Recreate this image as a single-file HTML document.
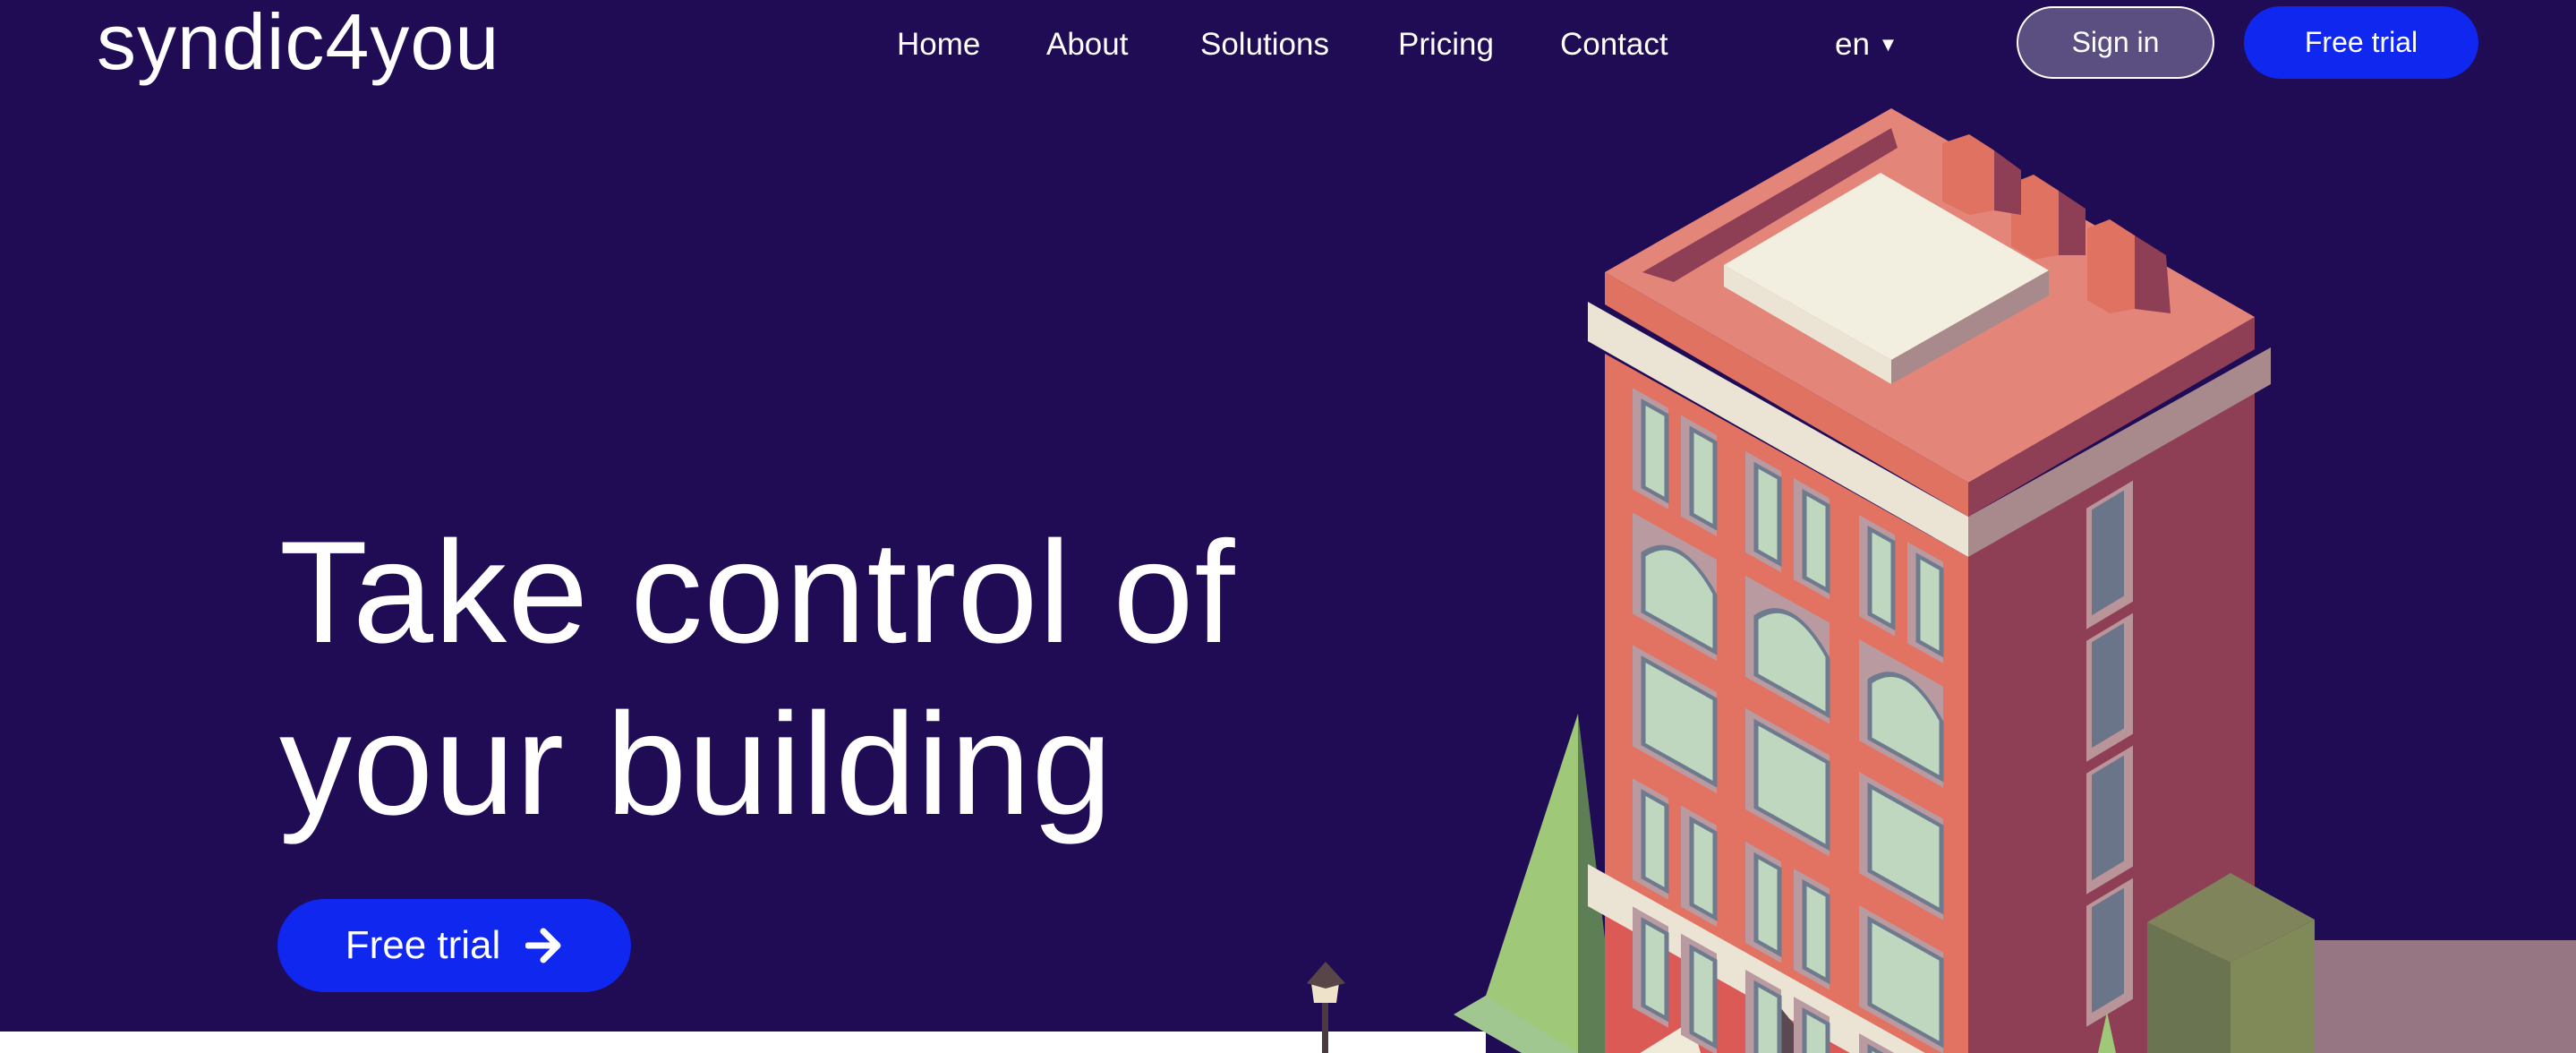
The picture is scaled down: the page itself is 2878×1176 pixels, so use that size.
<!DOCTYPE html>
<html style="overflow:hidden;width:2878px;height:1176px"><head><meta charset="utf-8"><style>
*{margin:0;padding:0;box-sizing:border-box}
body{width:2878px;height:1176px;overflow:hidden;background:#200b55;font-family:"Liberation Sans",sans-serif;color:#fff;position:relative}
.nav a{position:absolute;top:28px;font-size:35px;color:#fff;text-decoration:none;line-height:44px}
.logo{position:absolute;left:108px;top:-8px;font-size:88px;letter-spacing:1px;line-height:110px}
.btn{position:absolute;border-radius:44px;font-size:32px;display:flex;align-items:center;justify-content:center}
h1{position:absolute;left:312px;top:566px;font-size:162px;font-weight:normal;line-height:192px;letter-spacing:1px;white-space:nowrap}
</style></head><body>
<svg style="position:absolute;left:0;top:0" width="2878" height="1176" viewBox="0 0 2878 1176">
<rect x="0" y="1152" width="1660" height="24" fill="#fff"/>
<rect x="2586" y="1050" width="292" height="126" fill="#967682"/>
<rect x="1477" y="1110" width="7" height="66" fill="#4a3a3e"/>
<polygon points="1465,1098 1496,1098 1493,1120 1468,1120" fill="#eee3c8"/>
<polygon points="1460,1098 1481,1074 1503,1098 1481,1104" fill="#574548"/>
<polygon points="1624,1133 1680,1100 1810,1176 1700,1176" fill="#9fc78f"/>
<polygon points="1763,797 1660,1112 1763,1176" fill="#9fc878"/>
<polygon points="1763,797 1798,1090 1798,1176 1763,1176" fill="#5e7f55"/>
<polygon points="1793,395 2199,622 2199,1176 1793,1176" fill="#e27363"/>
<polygon points="2199,622 2519,429 2519,1176 2199,1176" fill="#8f3f55"/>
<polygon points="1793,1000 2199,1228 2199,1176 1793,1176" fill="#dc5a55"/>
<polygon points="1774,965 2199,1203 2199,1250 1774,1012" fill="#ebe3d3"/>
<polygon points="1810,1190 1890,1140 1900,1176 1810,1176" fill="#f0ead8"/>
<polygon points="1950,1176 1985,1120 2030,1176" fill="#5c4850"/>
<g transform="matrix(1,0.56,0,1,1793,395)">
<g fill="#b89aa0">
<rect x="31" y="21" width="40" height="113"/><rect x="85" y="21" width="40" height="113"/>
<rect x="157" y="21" width="40" height="113"/><rect x="211" y="21" width="40" height="113"/>
<rect x="284" y="21" width="40" height="113"/><rect x="338" y="21" width="40" height="113"/>
<rect x="31" y="160" width="94" height="113"/><rect x="157" y="160" width="94" height="113"/><rect x="284" y="160" width="94" height="113"/>
<rect x="31" y="308" width="94" height="113"/><rect x="157" y="308" width="94" height="113"/><rect x="284" y="308" width="94" height="113"/>
<rect x="31" y="457" width="40" height="113"/><rect x="85" y="457" width="40" height="113"/>
<rect x="157" y="457" width="40" height="113"/><rect x="211" y="457" width="40" height="113"/>
<rect x="284" y="457" width="94" height="113"/>
<rect x="31" y="600" width="40" height="113"/><rect x="85" y="600" width="40" height="113"/>
<rect x="157" y="600" width="40" height="113"/><rect x="211" y="600" width="40" height="113"/>
<rect x="284" y="600" width="40" height="113"/><rect x="338" y="600" width="40" height="113"/>
</g>
<g fill="#bfd6bf" stroke="#6e7b8e" stroke-width="5">
<rect x="43" y="30" width="26" height="95"/><rect x="97" y="30" width="26" height="95"/>
<rect x="169" y="30" width="26" height="95"/><rect x="223" y="30" width="26" height="95"/>
<rect x="296" y="30" width="26" height="95"/><rect x="350" y="30" width="26" height="95"/>
<path d="M43,264 V200 Q83,150 123,200 V264 Z"/><path d="M169,264 V200 Q209,150 249,200 V264 Z"/><path d="M296,264 V200 Q336,150 376,200 V264 Z"/>
<rect x="43" y="317" width="80" height="95"/><rect x="169" y="317" width="80" height="95"/><rect x="296" y="317" width="80" height="95"/>
<rect x="43" y="466" width="26" height="95"/><rect x="97" y="466" width="26" height="95"/>
<rect x="169" y="466" width="26" height="95"/><rect x="223" y="466" width="26" height="95"/>
<rect x="296" y="466" width="80" height="95"/>
<rect x="43" y="609" width="26" height="95"/><rect x="97" y="609" width="26" height="95"/>
<rect x="169" y="609" width="26" height="95"/><rect x="223" y="609" width="26" height="95"/>
<rect x="296" y="609" width="26" height="95"/><rect x="350" y="609" width="26" height="95"/>
</g>
</g>
<g transform="matrix(1,-0.6,0,1,2199,622)">
<g fill="#b99599"><rect x="132" y="25" width="52" height="135"/><rect x="132" y="173" width="52" height="135"/><rect x="132" y="321" width="52" height="135"/><rect x="132" y="469" width="52" height="135"/></g>
<g fill="#6b7589"><rect x="138" y="30" width="36" height="118"/><rect x="138" y="178" width="36" height="118"/><rect x="138" y="326" width="36" height="118"/><rect x="138" y="474" width="36" height="118"/></g>
</g>
<polygon points="1774,337 2199,577 2199,622 1774,381" fill="#ebe3d3"/>
<polygon points="2199,577 2537,388 2537,429 2199,622" fill="#a88a8c"/>
<polygon points="1793,304 2199,539 2199,577 1793,340" fill="#e07262"/>
<polygon points="2199,539 2519,354 2519,390 2199,577" fill="#8f3f55"/>
<polygon points="1793,304 2113,121 2519,354 2199,539" fill="#e4857a"/>
<polygon points="1835,304 2113,143 2120,165 1870,315" fill="#8f3f55"/>
<polygon points="1926,296 2101,193 2289,302 2113,402" fill="#f3efe0"/>
<polygon points="1926,296 2113,402 2113,429 1926,320" fill="#ebe3d3"/>
<polygon points="2113,402 2289,302 2289,330 2113,429" fill="#a88a8c"/>
<g fill="#e07262"><polygon points="2170,160 2200,150 2228,168 2228,235 2200,240 2170,225"/><polygon points="2247,205 2272,195 2300,213 2300,285 2272,290 2247,275"/><polygon points="2332,255 2357,245 2385,263 2385,345 2357,350 2332,335"/></g>
<g fill="#8f3f55"><polygon points="2228,168 2258,190 2258,240 2228,235"/><polygon points="2300,213 2330,233 2330,285 2300,285"/><polygon points="2385,263 2420,285 2425,350 2385,345"/></g>
<polygon points="2399,1030 2492,975 2586,1027 2492,1075" fill="#7f845a"/>
<polygon points="2399,1030 2492,1075 2492,1176 2399,1176" fill="#6b7450"/>
<polygon points="2492,1075 2586,1027 2586,1176 2492,1176" fill="#808a58"/>
<polygon points="2354,1130 2344,1176 2364,1176" fill="#9fc878"/>
</svg>
<div class="logo">syndic4you</div>
<div class="nav">
<a style="left:1002px">Home</a><a style="left:1169px">About</a><a style="left:1341px">Solutions</a><a style="left:1562px">Pricing</a><a style="left:1743px">Contact</a><a style="left:2050px">en <span style="font-size:22px;vertical-align:4px">▼</span></a>
</div>
<div class="btn" style="left:2253px;top:7px;width:221px;height:81px;background:#5b4e81;border:2px solid #fff">Sign in</div>
<div class="btn" style="left:2507px;top:7px;width:262px;height:81px;background:#0f27ee">Free trial</div>
<h1>Take control of<br>your building</h1>
<div class="btn" style="left:310px;top:1004px;width:395px;height:104px;background:#0f27ee;border-radius:52px;font-size:44px">Free trial<svg style="margin-left:28px" width="42" height="40" viewBox="0 0 42 40"><path d="M3,20 H36 M20,4 L36,20 L20,36" fill="none" stroke="#fff" stroke-width="7" stroke-linecap="round" stroke-linejoin="round"/></svg></div>
</body></html>
